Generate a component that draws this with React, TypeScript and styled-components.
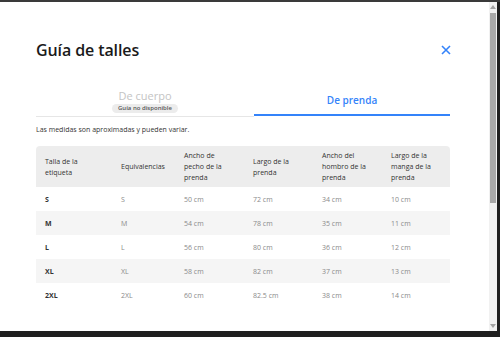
import React from 'react';
import styled, { createGlobalStyle } from 'styled-components';

const GlobalStyle = createGlobalStyle`
    html, body {
        margin: 0;
        padding: 0;
        width: 500px;
        height: 337px;
        overflow: hidden;
        background: #2b2b2b;
        font-family: "Open Sans", "Liberation Sans", sans-serif;
    }
`;

const headers = [
    'Talla de la etiqueta',
    'Equivalencias',
    'Ancho de pecho de la prenda',
    'Largo de la prenda',
    'Ancho del hombro de la prenda',
    'Largo de la manga de la prenda',
];

const rows = [
    ['S', 'S', '50 cm', '72 cm', '34 cm', '10 cm'],
    ['M', 'M', '54 cm', '78 cm', '35 cm', '11 cm'],
    ['L', 'L', '56 cm', '80 cm', '36 cm', '12 cm'],
    ['XL', 'XL', '58 cm', '82 cm', '37 cm', '13 cm'],
    ['2XL', '2XL', '60 cm', '82.5 cm', '38 cm', '14 cm'],
];

const columns = '76px 63px 69px 69px 69px 68px';

function App() {
    return (
        <>
            <GlobalStyle />
            <Screen>
                <Dialog>
                    <Content>
                        <TitleRow>
                            <Title>Guía de talles</Title>
                            <Close aria-label="Cerrar">
                                <svg width="10" height="10" viewBox="0 0 10 10">
                                    <path d="M1 1 L9 9 M9 1 L1 9" stroke="#3483fa" strokeWidth="1.6" fill="none" />
                                </svg>
                            </Close>
                        </TitleRow>
                        <Tabs>
                            <Tab>
                                <TabLabel>De cuerpo</TabLabel>
                                <Badge>Guía no disponible</Badge>
                            </Tab>
                            <Tab active>
                                <TabLabel active>De prenda</TabLabel>
                            </Tab>
                        </Tabs>
                        <Note>Las medidas son aproximadas y pueden variar.</Note>
                        <Table>
                            <HeadRow>
                                {headers.map((h) => (
                                    <HeadCell key={h}>{h}</HeadCell>
                                ))}
                            </HeadRow>
                            {rows.map((r, i) => (
                                <BodyRow key={r[0]} striped={i % 2 === 1}>
                                    {r.map((c, j) => (
                                        <Cell key={j} strong={j === 0}>
                                            {c}
                                        </Cell>
                                    ))}
                                </BodyRow>
                            ))}
                        </Table>
                    </Content>
                    <Scrollbar>
                        <Arrow up />
                        <Track>
                            <Thumb />
                        </Track>
                        <Arrow />
                    </Scrollbar>
                </Dialog>
            </Screen>
        </>
    );
}

export default App;

const Screen = styled.div`
    width: 500px;
    height: 337px;
    padding: 2px 3px 0 0;
    box-sizing: border-box;
    background: linear-gradient(#3a3a3a 0, #3a3a3a 2px, #1f1f1f 2px);
`;

const Dialog = styled.div`
    display: flex;
    height: 329px;
    background: #fff;
`;

const Content = styled.div`
    flex: 1;
    padding: 0 0 0 36px;
`;

const TitleRow = styled.div`
    display: flex;
    align-items: center;
    justify-content: space-between;
    width: 414px;
    padding-top: 36px;
    height: 24px;
`;

const Title = styled.h1`
    margin: 0;
    font-size: 16px;
    font-weight: 600;
    color: #1a1a1a;
    letter-spacing: -0.1px;
`;

const Close = styled.button`
    border: 0;
    background: none;
    padding: 0;
    margin-right: -1px;
    display: flex;
`;

const Tabs = styled.div`
    display: grid;
    grid-template-columns: 218px 196px;
    height: 54px;
`;

const Tab = styled.div<{ active?: boolean }>`
    display: flex;
    flex-direction: column;
    align-items: center;
    justify-content: flex-end;
    padding-bottom: ${(p) => (p.active ? '6px' : '3px')};
    border-bottom: ${(p) => (p.active ? '2px solid #3483fa' : '1px solid #e6e6e6')};
    box-sizing: border-box;
    height: ${(p) => (p.active ? '54px' : '55px')};
`;

const TabLabel = styled.span<{ active?: boolean }>`
    font-size: ${(p) => (p.active ? '10px' : '11px')};
    font-weight: ${(p) => (p.active ? 600 : 400)};
    color: ${(p) => (p.active ? '#3483fa' : '#c4c4c4')};
    line-height: 14px;
    margin-bottom: ${(p) => (p.active ? '1px' : '1px')};
`;

const Badge = styled.span`
    background: #ececec;
    color: #555;
    font-size: 6px;
    font-weight: 600;
    line-height: 9px;
    padding: 0 6px;
    border-radius: 5px;
`;

const Note = styled.p`
    margin: 9px 0 0;
    font-size: 7px;
    color: #333;
    line-height: 10px;
`;

const Table = styled.div`
    width: 414px;
    margin-top: 11px;
`;

const HeadRow = styled.div`
    display: grid;
    grid-template-columns: ${columns};
    align-items: center;
    height: 41px;
    background: #ededed;
    border-radius: 4px 4px 0 0;
`;

const HeadCell = styled.div`
    padding: 0 12px 0 9px;
    font-size: 7px;
    font-weight: 500;
    line-height: 11px;
    color: #333;
`;

const BodyRow = styled.div<{ striped?: boolean }>`
    display: grid;
    grid-template-columns: ${columns};
    align-items: center;
    height: 24px;
    background: ${(p) => (p.striped ? '#f5f5f5' : '#fff')};
`;

const Cell = styled.div<{ strong?: boolean }>`
    padding-left: 9px;
    font-size: 7px;
    font-weight: ${(p) => (p.strong ? 700 : 400)};
    color: ${(p) => (p.strong ? '#333' : '#8a8a8a')};
`;

const Scrollbar = styled.div`
    width: 8px;
    display: flex;
    flex-direction: column;
    background: #f1f1f1;
`;

const Arrow = styled.div<{ up?: boolean }>`
    height: 10px;
    display: flex;
    align-items: center;
    justify-content: center;
    &::after {
        content: '';
        border-left: 3px solid transparent;
        border-right: 3px solid transparent;
        ${(p) => (p.up ? 'border-bottom: 4px solid #a3a3a3;' : 'border-top: 4px solid #a3a3a3;')}
    }
`;

const Track = styled.div`
    flex: 1;
    padding: 1px 1px;
`;

const Thumb = styled.div`
    height: 190px;
    background: #a8a8a8;
`;
